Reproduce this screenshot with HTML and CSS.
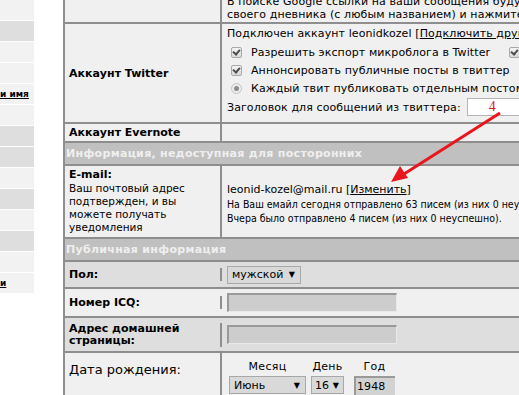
FILE: index.html
```html
<!DOCTYPE html>
<html>
  <head>
    <meta charset="utf-8">
    <link rel="stylesheet" href="styles.css">
  </head>
  <body>
    <div class="page">
      <div class="sidebar">
        <div class="item"></div>
        <div class="item dark"></div>
        <div class="item"></div>
        <div class="item"></div>
        <div class="item"><a href="#">и имя</a></div>
        <div class="item"></div>
        <div class="item dark"></div>
        <div class="item dark"></div>
        <div class="item"></div>
        <div class="item dark"></div>
        <div class="item"></div>
        <div class="item dark"></div>
        <div class="item"></div>
        <div class="item"><a href="#">и</a></div>
      </div>

      <div class="form">
        <div class="row intro">
          <div class="label"></div>
          <div class="value">
            В поиске Google ссылки на ваши сообщения будут вести на Ваш дневник<br>
            своего дневника (с любым названием) и нажмите «Сохранить»
          </div>
        </div>

        <div class="row twitter">
          <div class="label">Аккаунт Twitter</div>
          <div class="value">
            <div class="line">Подключен аккаунт leonidkozel [<a href="#">Подключить другой</a>]</div>
            <div class="opt">
              <span class="check"></span>Разрешить экспорт микроблога в Twitter
              <span class="check second"></span>Экспорт
            </div>
            <div class="opt"><span class="check"></span>Аннонсировать публичные посты в твиттер</div>
            <div class="opt"><span class="radio"></span>Каждый твит публиковать отдельным постом</div>
            <div class="opt title">
              Заголовок для сообщений из твиттера:
              <span class="field"><span class="mark">4</span></span>
            </div>
          </div>
        </div>

        <div class="row evernote">
          <div class="label">Аккаунт Evernote</div>
          <div class="value"></div>
        </div>

        <div class="section">Информация, недоступная для посторонних</div>

        <div class="row email">
          <div class="label">
            <div class="name">E-mail:</div>
            <div class="note">Ваш почтовый адрес<br>подтвержден, и вы<br>можете получать<br>уведомления</div>
          </div>
          <div class="value">
            <div class="address">leonid-kozel@mail.ru [<a href="#">Изменить</a>]</div>
            <div>На Ваш емайл сегодня отправлено 63 писем (из них 0 неуспешно).</div>
            <div>Вчера было отправлено 4 писем (из них 0 неуспешно).</div>
          </div>
        </div>

        <div class="section">Публичная информация</div>

        <div class="row dark sex">
          <div class="label">Пол:</div>
          <div class="value">
            <span class="select sex-select">мужской <i>▼</i></span>
          </div>
        </div>

        <div class="row icq">
          <div class="label">Номер ICQ:</div>
          <div class="value"><span class="input"></span></div>
        </div>

        <div class="row dark site">
          <div class="label">Адрес домашней<br>страницы:</div>
          <div class="value"><span class="input"></span></div>
        </div>

        <div class="row birth">
          <div class="label big">Дата рождения:</div>
          <div class="value">
            <div class="date">
              <div class="part">
                <div class="cap">Месяц</div>
                <span class="select month">Июнь <i>▼</i></span>
              </div>
              <div class="part">
                <div class="cap">День</div>
                <span class="select day">16 <i>▼</i></span>
              </div>
              <div class="part">
                <div class="cap">Год</div>
                <span class="year">1948</span>
              </div>
            </div>
          </div>
        </div>
      </div>
    </div>

    <svg class="arrow" width="519" height="395" viewBox="0 0 519 395">
      <line x1="500" y1="113" x2="404" y2="174" stroke="#e9161e" stroke-width="3" />
      <polygon points="391,182 408,178 400,166" fill="#e9161e" />
    </svg>
  </body>
</html>
```

FILE: styles.css
```css
body {
  margin: 0;
  width: 519px;
  height: 395px;
  overflow: hidden;
  position: relative;
  background-color: #fff;
  color: #000;
  font-family: "DejaVu Sans", Verdana, sans-serif;
  font-size: 11px;
}

a {
  color: #000;
}

.page {
  display: flex;
  align-items: flex-start;
  gap: 29px;
}

/* left menu, only its edge is visible */
.sidebar {
  width: 34px;
  flex-shrink: 0;
  overflow: hidden;
}

.sidebar .item {
  height: 20px;
  margin-bottom: 1px;
  line-height: 20px;
  background-color: #f2f2f2;
  font-size: 9px;
  font-weight: bold;
  white-space: nowrap;
}

.sidebar .item.dark {
  background-color: #dedede;
}

/* settings table */
.form {
  width: 620px;
  flex-shrink: 0;
  margin-top: -8px;
  border-left: 2px solid #8e8e8e;
}

.row {
  display: grid;
  grid-template-columns: 157px 1fr;
  border-bottom: 2px solid #8e8e8e;
  background-color: #f0f0f0;
}

.row.dark {
  background-color: #dedede;
}

.label {
  border-right: 2px solid #8e8e8e;
  padding: 0 4px;
  font-weight: bold;
  display: flex;
  align-items: center;
}

.value {
  padding: 0 5px;
  white-space: nowrap;
  overflow: hidden;
  letter-spacing: 0.1px;
}

.intro .value {
  padding-top: 3px;
  padding-bottom: 1px;
  line-height: 13px;
}

.twitter .value {
  padding-top: 3px;
  padding-bottom: 5px;
}

.twitter .line {
  line-height: 13px;
  margin-bottom: 3px;
}

.opt {
  height: 18px;
  display: flex;
  align-items: center;
}

.opt.title {
  height: 20px;
}

.check,
.radio {
  width: 9px;
  height: 9px;
  margin: 0 9px 0 4px;
  border: 1px solid #a9a9a9;
  border-radius: 2px;
  background: linear-gradient(#f4f4f4, #d9d9d9);
  position: relative;
  flex-shrink: 0;
}

.check::after {
  content: "";
  position: absolute;
  left: 2px;
  top: 0;
  width: 3px;
  height: 5px;
  border: solid #4d4d4d;
  border-width: 0 2px 2px 0;
  transform: rotate(40deg);
}

.check.second {
  margin-left: 19px;
}

.radio {
  border-radius: 50%;
  border-color: #c4c4c4;
  background: #ececec;
}

.radio::after {
  content: "";
  position: absolute;
  left: 2px;
  top: 2px;
  width: 5px;
  height: 5px;
  border-radius: 50%;
  background: #8c8c8c;
}

.field {
  display: inline-block;
  width: 90px;
  height: 16px;
  margin-left: 6px;
  border: 1px solid #b4b4b4;
  background-color: #fff;
}

.mark {
  display: block;
  padding-left: 21px;
  color: #e0161e;
  font-family: "Liberation Serif", serif;
  font-size: 14px;
  line-height: 16px;
}

.evernote {
  height: 17px;
}

.section {
  height: 21px;
  line-height: 21px;
  padding-left: 1px;
  background-color: #c0c0c0;
  border-bottom: 2px solid #8e8e8e;
  color: #efefef;
  font-weight: bold;
  letter-spacing: 0.3px;
}

.email .label {
  display: block;
  padding-top: 1px;
  padding-bottom: 3px;
}

.email .name {
  line-height: 15px;
}

.email .note {
  font-size: 10.5px;
  font-weight: normal;
  line-height: 13px;
}

.email .value {
  font-family: "DejaVu Sans Condensed", "Liberation Sans", sans-serif;
  font-size: 10.5px;
  letter-spacing: 0;
  line-height: 14px;
  align-self: center;
  padding-top: 5px;
}

.email .address {
  font-family: "DejaVu Sans", Verdana, sans-serif;
  font-size: 11px;
}

.sex,
.icq,
.site {
  align-items: center;
}

.sex {
  height: 25px;
}

.icq {
  height: 27px;
}

.site {
  height: 33px;
}

.site .label {
  line-height: 12px;
}

.sex .value,
.icq .value,
.site .value {
  display: flex;
  align-items: center;
}

.select {
  display: inline-flex;
  justify-content: space-between;
  align-items: center;
  box-sizing: border-box;
  height: 18px;
  padding: 0 5px 0 4px;
  border: 1px solid #a8a8a8;
  background-color: #d9d9d9;
  letter-spacing: 0;
}

.select i {
  font-style: normal;
  font-size: 8px;
}

.sex-select {
  width: 74px;
}

.input {
  display: block;
  box-sizing: border-box;
  width: 170px;
  height: 19px;
  background-color: #cdcdcd;
  border-top: 2px solid #9a9a9a;
  border-left: 2px solid #9a9a9a;
  border-right: 1px solid #e9e9e9;
  border-bottom: 1px solid #e9e9e9;
}

.birth {
  height: 50px;
}

.label.big {
  align-items: flex-start;
  padding-top: 9px;
  font-size: 13px;
  font-weight: normal;
  line-height: 16px;
}

.birth .value {
  padding-left: 7px;
  padding-top: 7px;
}

.date {
  display: flex;
  gap: 5px;
}

.part {
  display: flex;
  flex-direction: column;
  align-items: center;
  gap: 3px;
}

.part:last-child {
  margin-left: 5px;
}

.cap {
  line-height: 13px;
  letter-spacing: 0.3px;
}

.month {
  width: 77px;
}

.day {
  width: 33px;
  padding: 0 4px 0 3px;
}

.year {
  display: block;
  box-sizing: border-box;
  width: 41px;
  height: 20px;
  padding-left: 1px;
  line-height: 18px;
  background-color: #d2d2d2;
  border-top: 2px solid #9a9a9a;
  border-left: 2px solid #9a9a9a;
}

.arrow {
  position: absolute;
  left: 0;
  top: 0;
  pointer-events: none;
}
```
